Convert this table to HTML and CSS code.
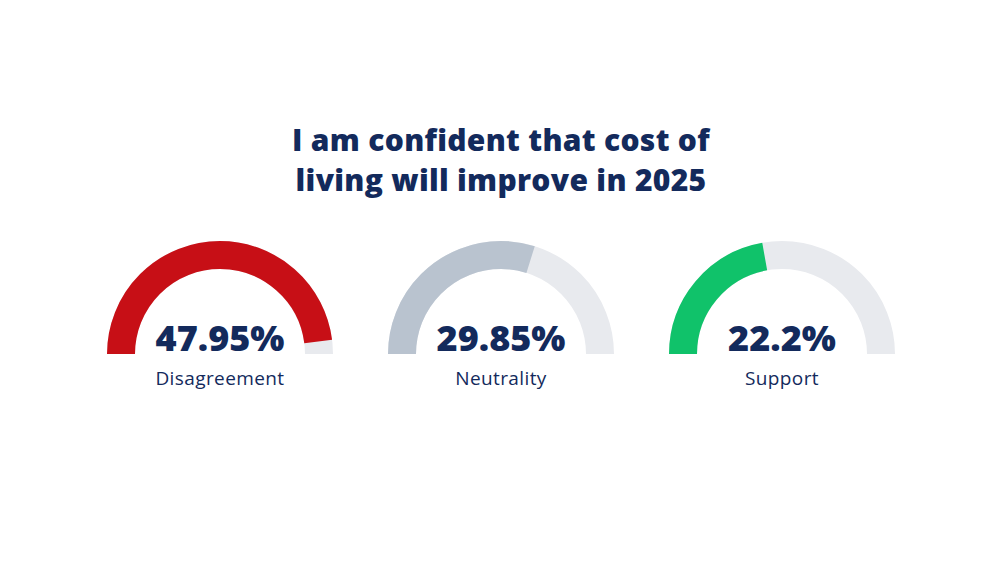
FILE: index.html
```html
<!DOCTYPE html>
<html lang="en">
<head>
<meta charset="utf-8">
<title>Cost of living survey</title>
<link rel="stylesheet" href="styles.css">
</head>
<body>
<main class="page">
  <h1 class="title">I am confident that cost of<br>living will improve in 2025</h1>
  <section class="gauges">
    <div class="gauge">
      <div class="dial">
        <svg class="arc" viewBox="0 0 228 114" width="228" height="114">
          <path class="track" d="M 15 114 A 99 99 0 0 1 213 114" pathLength="100"/>
          <path class="fill red" d="M 15 114 A 99 99 0 0 1 213 114" pathLength="100" stroke-dasharray="95.9 200"/>
        </svg>
        <div class="value">47.95%</div>
      </div>
      <div class="label">Disagreement</div>
    </div>
    <div class="gauge">
      <div class="dial">
        <svg class="arc" viewBox="0 0 228 114" width="228" height="114">
          <path class="track" d="M 15 114 A 99 99 0 0 1 213 114" pathLength="100"/>
          <path class="fill grey" d="M 15 114 A 99 99 0 0 1 213 114" pathLength="100" stroke-dasharray="59.7 200"/>
        </svg>
        <div class="value">29.85%</div>
      </div>
      <div class="label">Neutrality</div>
    </div>
    <div class="gauge">
      <div class="dial">
        <svg class="arc" viewBox="0 0 228 114" width="228" height="114">
          <path class="track" d="M 15 114 A 99 99 0 0 1 213 114" pathLength="100"/>
          <path class="fill green" d="M 15 114 A 99 99 0 0 1 213 114" pathLength="100" stroke-dasharray="44.4 200"/>
        </svg>
        <div class="value">22.2%</div>
      </div>
      <div class="label">Support</div>
    </div>
  </section>
</main>
</body>
</html>
```
FILE: styles.css
```css
* { box-sizing: border-box; }
html, body {
  margin: 0;
  padding: 0;
  background: #ffffff;
}
body {
  width: 1000px;
  height: 563px;
  overflow: hidden;
  font-family: "Open Sans", "Noto Sans", sans-serif;
  color: #132a5c;
}
.page {
  display: flex;
  flex-direction: column;
  align-items: center;
  padding-top: 120px;
  padding-left: 2px;
}
.title {
  margin: 0;
  font-size: 30px;
  line-height: 40px;
  font-weight: 800;
  text-align: center;
  color: #132a5c;
  letter-spacing: 0.3px;
}
.gauges {
  display: flex;
  gap: 53px;
  margin-top: 40px;
}
.gauge {
  display: flex;
  flex-direction: column;
  align-items: center;
  width: 228px;
}
.dial {
  position: relative;
  width: 228px;
  height: 114px;
}
.arc {
  display: block;
}
.arc path {
  fill: none;
  stroke-width: 28;
  stroke-linecap: butt;
}
.track { stroke: #e8eaee; }
.red { stroke: #c70f16; }
.grey { stroke: #b9c3cf; }
.green { stroke: #10c26a; }
.value {
  position: absolute;
  left: 0;
  right: 0;
  bottom: -6px;
  text-align: center;
  font-size: 36px;
  font-weight: 800;
  line-height: 44px;
  color: #132a5c;
}
.label {
  margin-top: 12px;
  font-size: 19px;
  line-height: 24px;
  font-weight: 400;
  color: #132a5c;
  letter-spacing: 0.4px;
}
```
